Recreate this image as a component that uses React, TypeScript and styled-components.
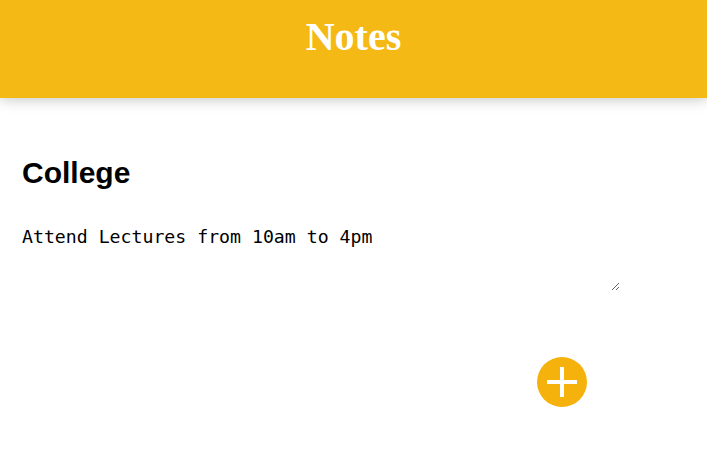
import styled, { createGlobalStyle } from "styled-components";

const GlobalStyle = createGlobalStyle`
  html, body {
    margin: 0;
    padding: 0;
    background: #fff;
  }
`;

const Header = styled.header`
  background-color: #f5b916;
  height: 98px;
  box-sizing: border-box;
  padding-top: 14px;
  box-shadow: 0 0 14px rgba(0, 0, 0, 0.28);
  position: relative;
  z-index: 1;
`;

const Title = styled.h1`
  margin: 0;
  text-align: center;
  color: #fff;
  font-family: "Liberation Serif", "Times New Roman", serif;
  font-size: 40px;
  line-height: 46px;
  font-weight: bold;
`;

const NoteForm = styled.form`
  width: 598px;
  margin: 0 0 0 22px;
  padding-top: 57px;
  display: flex;
  flex-direction: column;
`;

const TitleInput = styled.input`
  border: none;
  outline: none;
  padding: 0;
  margin: 0;
  font-family: "Liberation Sans", Arial, sans-serif;
  font-size: 30px;
  font-weight: bold;
  line-height: 36px;
  height: 36px;
  color: #000;
  background: transparent;
`;

const ContentArea = styled.textarea`
  border: none;
  outline: none;
  padding: 0;
  margin: 35px 0 0 0;
  font-family: "DejaVu Sans Mono", "Liberation Mono", monospace;
  font-size: 18.2px;
  line-height: 21px;
  height: 65px;
  color: #000;
  background: transparent;
`;

const AddButton = styled.button<{ size: number }>`
  align-self: flex-end;
  margin: 66px 33px 0 0;
  width: ${(p) => p.size}px;
  height: ${(p) => p.size}px;
  border-radius: 50%;
  border: none;
  padding: 0;
  background-color: #f5b20c;
  display: flex;
  align-items: center;
  justify-content: center;
  cursor: pointer;
`;

const PlusIcon = () => (
  <svg width="32" height="32" viewBox="0 0 32 32">
    <path d="M16 1 V31 M1 16 H31" stroke="#fff" strokeWidth="4" fill="none" />
  </svg>
);

export default function App() {
  return (
    <>
      <GlobalStyle />
      <Header>
        <Title>Notes</Title>
      </Header>
      <NoteForm onSubmit={(e) => e.preventDefault()}>
        <TitleInput name="title" defaultValue="College" placeholder="Title" />
        <ContentArea
          name="content"
          rows={3}
          defaultValue="Attend Lectures from 10am to 4pm"
          placeholder="Take a note..."
        />
        <AddButton type="submit" size={50}>
          <PlusIcon />
        </AddButton>
      </NoteForm>
    </>
  );
}
